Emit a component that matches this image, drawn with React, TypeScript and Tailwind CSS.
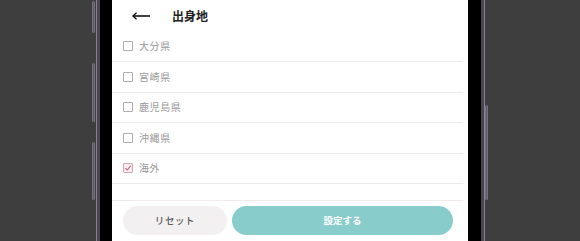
import React from 'react';

const prefectures = [
  { name: '大分県', checked: false },
  { name: '宮崎県', checked: false },
  { name: '鹿児島県', checked: false },
  { name: '沖縄県', checked: false },
  { name: '海外', checked: true },
];

const font = { fontFamily: '"Noto Sans CJK JP", "Noto Sans", sans-serif' };

const Checkbox: React.FC<{ checked: boolean }> = ({ checked }) =>
  checked ? (
    <div className="w-[10px] h-[10px] border border-[#d8a2b4] bg-[#fbeef3] rounded-[1px] flex items-center justify-center">
      <svg width="8" height="8" viewBox="0 0 8 8">
        <path d="M1.3 4.2 L3.2 6 L6.8 1.8" fill="none" stroke="#c9607f" strokeWidth="1.1" />
      </svg>
    </div>
  ) : (
    <div className="w-[10px] h-[10px] border border-[#adadad] rounded-[1px] bg-white" />
  );

export default function App() {
  return (
    <div className="relative w-[580px] h-[241px] bg-[#3e3e3e] overflow-hidden flex" style={font}>
      {/* side buttons */}
      <div className="absolute left-[92px] top-[1px] w-[3px] h-[32px] bg-[#5f5866] rounded-sm border-x border-[#77707e]" />
      <div className="absolute left-[92px] top-[63px] w-[3px] h-[59px] bg-[#5f5866] rounded-sm border-x border-[#77707e]" />
      <div className="absolute left-[92px] top-[142px] w-[3px] h-[58px] bg-[#5f5866] rounded-sm border-x border-[#77707e]" />
      <div className="absolute left-[485px] top-[105px] w-[3px] h-[95px] bg-[#5f5866] rounded-sm border-x border-[#77707e]" />

      <div className="ml-[96px] flex h-full">
        <div className="w-[4px] bg-[#4a444f] border-l border-[#8a8093]" />
        <div className="w-[12px] bg-black" />

        {/* screen */}
        <div className="w-[356px] bg-white flex flex-col">
          <div className="h-[31.5px] flex items-center pl-[20px] mr-[5px]">
            <svg width="19" height="8" viewBox="0 0 19 8">
              <path d="M1 4 H18" stroke="#111" strokeWidth="1.6" />
              <path d="M4.5 0.8 L1 4 L4.5 7.2" fill="none" stroke="#111" strokeWidth="1.4" />
            </svg>
            <span className="ml-[21px] text-[12px] font-bold text-[#222] leading-none">出身地</span>
          </div>

          <div className="mr-[5px]">
            {prefectures.map((p) => (
              <div
                key={p.name}
                className="h-[30.5px] flex items-center gap-[6px] pl-[11px] border-b border-[#ebebeb]"
              >
                <Checkbox checked={p.checked} />
                <span className="text-[10px] tracking-[0.6px] text-[#9a9a9a] leading-none">{p.name}</span>
              </div>
            ))}
          </div>

          <div className="h-[17px] mr-[5px] border-b border-[#f0eaec]" />

          <div className="flex gap-[5px] pl-[11px] pr-[15px] pt-[5px]">
            <button className="w-[104px] h-[29px] rounded-full bg-[#f2f0f0] text-[9.5px] tracking-[0.6px] font-medium text-[#5a5a5a] leading-none">
              リセット
            </button>
            <button className="flex-1 h-[29px] rounded-full bg-[#88cdcc] text-[9.5px] font-bold text-white leading-none">
              設定する
            </button>
          </div>
        </div>

        <div className="w-[13px] bg-black" />
        <div className="w-[4px] bg-[#4a444f] border-r border-[#8a8093]" />
      </div>
    </div>
  );
}
